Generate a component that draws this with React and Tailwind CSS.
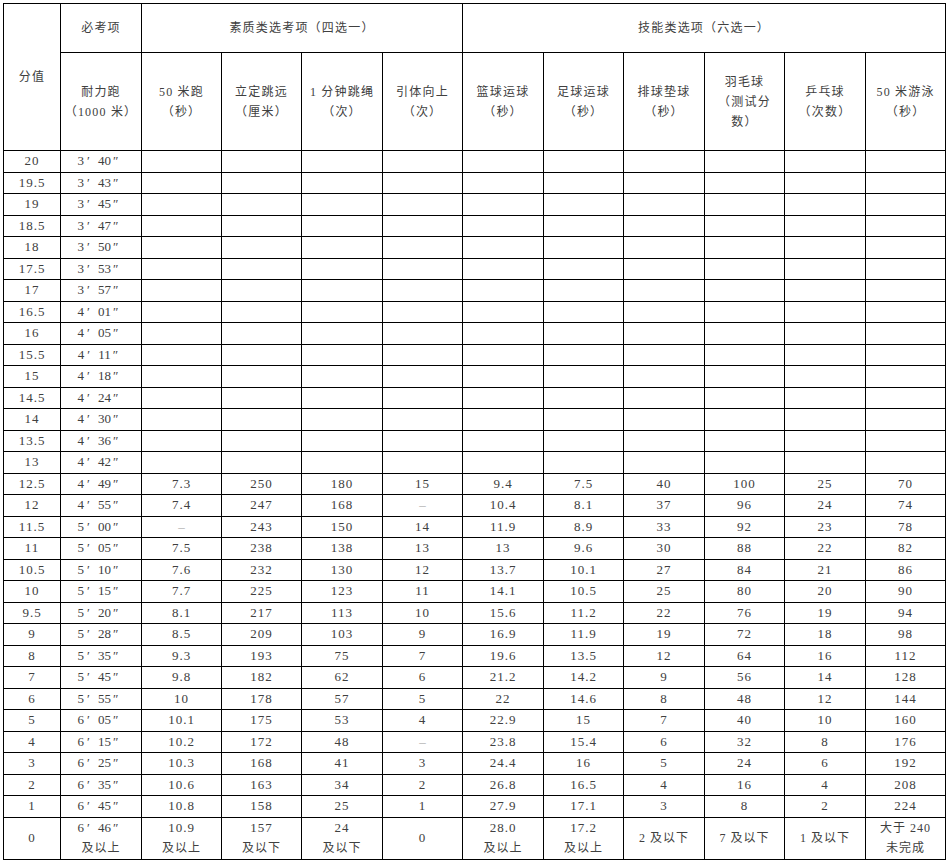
import React from "react";

const cjk = "font-['Liberation_Serif','Noto_Sans_CJK_SC',serif]";

const colWidths = [57, 81, 80, 80, 81, 80, 81, 80, 81, 80, 81, 80];

const subHeaders = [
  ["耐力跑", "（1000 米）"],
  ["50 米跑", "（秒）"],
  ["立定跳远", "（厘米）"],
  ["1 分钟跳绳", "（次）"],
  ["引体向上", "（次）"],
  ["篮球运球", "（秒）"],
  ["足球运球", "（秒）"],
  ["排球垫球", "（秒）"],
  ["羽毛球", "（测试分", "数）"],
  ["乒乓球", "（次数）"],
  ["50 米游泳", "（秒）"],
];

// score, endurance run (min/sec), then the ten optional items
const rows = [
  ["20", "3:40"],
  ["19.5", "3:43"],
  ["19", "3:45"],
  ["18.5", "3:47"],
  ["18", "3:50"],
  ["17.5", "3:53"],
  ["17", "3:57"],
  ["16.5", "4:01"],
  ["16", "4:05"],
  ["15.5", "4:11"],
  ["15", "4:18"],
  ["14.5", "4:24"],
  ["14", "4:30"],
  ["13.5", "4:36"],
  ["13", "4:42"],
  ["12.5", "4:49", "7.3", "250", "180", "15", "9.4", "7.5", "40", "100", "25", "70"],
  ["12", "4:55", "7.4", "247", "168", "–", "10.4", "8.1", "37", "96", "24", "74"],
  ["11.5", "5:00", "–", "243", "150", "14", "11.9", "8.9", "33", "92", "23", "78"],
  ["11", "5:05", "7.5", "238", "138", "13", "13", "9.6", "30", "88", "22", "82"],
  ["10.5", "5:10", "7.6", "232", "130", "12", "13.7", "10.1", "27", "84", "21", "86"],
  ["10", "5:15", "7.7", "225", "123", "11", "14.1", "10.5", "25", "80", "20", "90"],
  ["9.5", "5:20", "8.1", "217", "113", "10", "15.6", "11.2", "22", "76", "19", "94"],
  ["9", "5:28", "8.5", "209", "103", "9", "16.9", "11.9", "19", "72", "18", "98"],
  ["8", "5:35", "9.3", "193", "75", "7", "19.6", "13.5", "12", "64", "16", "112"],
  ["7", "5:45", "9.8", "182", "62", "6", "21.2", "14.2", "9", "56", "14", "128"],
  ["6", "5:55", "10", "178", "57", "5", "22", "14.6", "8", "48", "12", "144"],
  ["5", "6:05", "10.1", "175", "53", "4", "22.9", "15", "7", "40", "10", "160"],
  ["4", "6:15", "10.2", "172", "48", "–", "23.8", "15.4", "6", "32", "8", "176"],
  ["3", "6:25", "10.3", "168", "41", "3", "24.4", "16", "5", "24", "6", "192"],
  ["2", "6:35", "10.6", "163", "34", "2", "26.8", "16.5", "4", "16", "4", "208"],
  ["1", "6:45", "10.8", "158", "25", "1", "27.9", "17.1", "3", "8", "2", "224"],
];

const lastRow = [
  ["0"],
  ["6:46", "及以上"],
  ["10.9", "及以上"],
  ["157", "及以下"],
  ["24", "及以下"],
  ["0"],
  ["28.0", "及以上"],
  ["17.2", "及以上"],
  ["2 及以下"],
  ["7 及以下"],
  ["1 及以下"],
  ["大于 240", "未完成"],
];

const cell = "border border-black p-0 text-center align-middle";
const head = `${cell} font-normal tracking-[1.2px] text-[12px]`;

const Time = ({ value }) => {
  const [m, s] = value.split(":");
  return (
    <span className="inline-flex items-baseline justify-center pr-[6px]">
      <span>{m}</span>
      <span className="ml-[3px] mr-[8px]">′</span>
      <span>{s}</span>
      <span className="ml-[2px]">″</span>
    </span>
  );
};

const Value = ({ value }) => {
  if (!value) return null;
  if (value.includes(":")) return <Time value={value} />;
  if (value === "–") return <span className="text-[#aaa]">–</span>;
  if (/[\u4e00-\u9fff]/.test(value))
    return <span className="tracking-[1px] text-[12px]">{value}</span>;
  return <span className="tracking-[1px]">{value}</span>;
};

export default function App() {
  return (
    <div className="min-h-screen bg-white pt-[3px] pl-[3px]">
      <table
        className={`w-[942px] table-fixed border-collapse text-[13px] leading-[20px] text-[#404040] ${cjk}`}
      >
        <colgroup>
          {colWidths.map((w, i) => (
            <col key={i} style={{ width: w }} />
          ))}
        </colgroup>
        <thead>
          <tr className="h-[49px]">
            <th rowSpan={2} className={head}>
              分值
            </th>
            <th className={head}>必考项</th>
            <th colSpan={4} className={head}>
              素质类选考项（四选一）
            </th>
            <th colSpan={6} className={head}>
              技能类选项（六选一）
            </th>
          </tr>
          <tr className="h-[98px]">
            {subHeaders.map((lines, i) => (
              <th key={i} className={head}>
                {lines.map((l, j) => (
                  <div key={j}>{l}</div>
                ))}
              </th>
            ))}
          </tr>
        </thead>
        <tbody>
          {rows.map((r) => (
            <tr key={r[0]} className="h-[21.5px]">
              {colWidths.map((_, i) => (
                <td key={i} className={cell}>
                  <Value value={r[i]} />
                </td>
              ))}
            </tr>
          ))}
          <tr className="h-[42px]">
            {lastRow.map((lines, i) => (
              <td key={i} className={cell}>
                {lines.map((l, j) => (
                  <div key={j}>
                    <Value value={l} />
                  </div>
                ))}
              </td>
            ))}
          </tr>
        </tbody>
      </table>
    </div>
  );
}
